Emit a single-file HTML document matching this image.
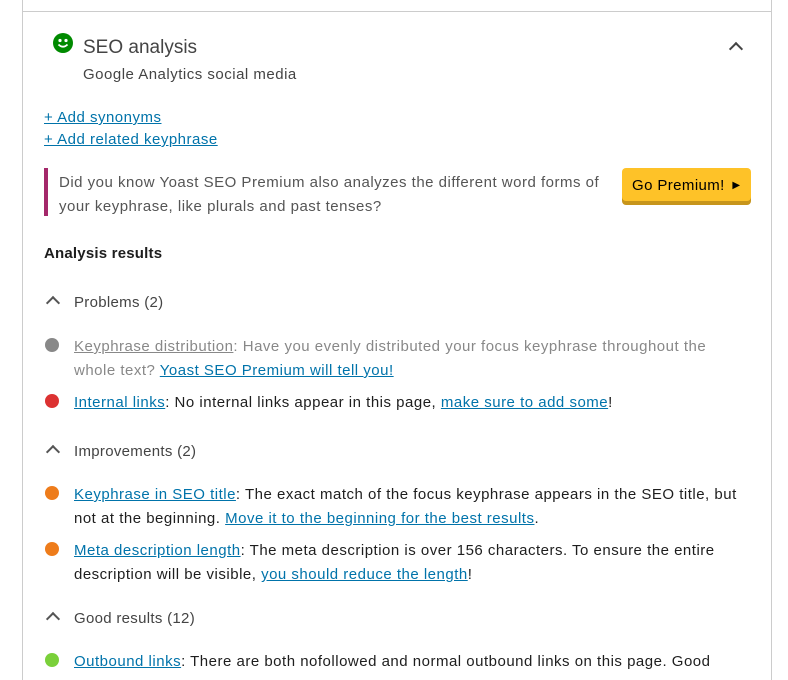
<!DOCTYPE html>
<html><head><style>
body{margin:0;width:788px;height:668px;overflow:hidden;background:#fff;font-family:"Liberation Sans",sans-serif;color:#1e1e1e;position:relative}
.a{position:absolute;white-space:nowrap}
a{color:#0073aa;text-decoration:underline}
.t{font-size:15px;line-height:24px;color:#1e1e1e;letter-spacing:0.5px}
.dot{position:absolute;width:14px;height:14px;border-radius:50%}
.chev{position:absolute;width:8px;height:8px;border-left:2px solid #555;border-top:2px solid #555;transform:rotate(45deg)}
</style></head><body>
<div style="position:absolute;left:22px;top:0;width:748px;height:680px;border-left:1px solid #ccc;border-right:1px solid #ccc"></div>
<div style="position:absolute;left:22px;top:11px;width:750px;height:1px;background:#ccc"></div>

<svg class="a" style="left:53px;top:33px" width="20" height="20" viewBox="0 0 20 20"><circle cx="10" cy="10" r="10" fill="#008a00"/><circle cx="7" cy="7.5" r="1.6" fill="#fff"/><circle cx="13" cy="7.5" r="1.6" fill="#fff"/><path d="M5.5 11.5 Q10 16 14.5 11.5" stroke="#fff" stroke-width="1.8" fill="none"/></svg>
<div class="a" style="left:83px;top:37px;font-size:19px;color:#444">SEO analysis</div>
<div class="a" style="left:83px;top:66px;font-size:15px;color:#444;letter-spacing:0.5px">Google Analytics social media</div>
<div class="chev" style="left:731px;top:44px;border-color:#444"></div>

<div class="a t" style="left:44px;top:106px"><a>+ Add synonyms</a></div>
<div class="a t" style="left:44px;top:128px"><a>+ Add related keyphrase</a></div>

<div style="position:absolute;left:44px;top:168px;width:4px;height:48px;background:#a4286a"></div>
<div class="a t" style="left:59px;top:171px;color:#555">Did you know Yoast SEO Premium also analyzes the different word forms of<br>your keyphrase, like plurals and past tenses?</div>
<div style="position:absolute;left:622px;top:168px;width:129px;height:33px;background:#fec228;border-radius:4px;box-shadow:0 4px 0 #c7951b;font-size:15px;line-height:35px;color:#000;text-indent:10px;letter-spacing:0.4px">Go Premium! <span style="font-size:10px;position:relative;top:-2px;left:3px">&#9654;</span></div>

<div class="a" style="left:44px;top:245px;font-size:15px;font-weight:bold;color:#1e1e1e;letter-spacing:0.2px">Analysis results</div>

<div class="chev" style="left:48px;top:298px"></div>
<div class="a t" style="left:74px;top:291px;color:#444;letter-spacing:0.3px">Problems (2)</div>
<div class="dot" style="left:45px;top:338px;background:#888"></div>
<div class="a t" style="left:74px;top:335px;color:#888"><a style="color:#888">Keyphrase distribution</a>: Have you evenly distributed your focus keyphrase throughout the<br>whole text? <a>Yoast SEO Premium will tell you!</a></div>
<div class="dot" style="left:45px;top:394px;background:#dc3232"></div>
<div class="a t" style="left:74px;top:391px"><a>Internal links</a>: No internal links appear in this page, <a>make sure to add some</a>!</div>

<div class="chev" style="left:48px;top:447px"></div>
<div class="a t" style="left:74px;top:440px;color:#444;letter-spacing:0.3px">Improvements (2)</div>
<div class="dot" style="left:45px;top:486px;background:#ee7c1b"></div>
<div class="a t" style="left:74px;top:483px"><a>Keyphrase in SEO title</a>: The exact match of the focus keyphrase appears in the SEO title, but<br>not at the beginning. <a>Move it to the beginning for the best results</a>.</div>
<div class="dot" style="left:45px;top:542px;background:#ee7c1b"></div>
<div class="a t" style="left:74px;top:539px"><a>Meta description length</a>: The meta description is over 156 characters. To ensure the entire<br>description will be visible, <a>you should reduce the length</a>!</div>

<div class="chev" style="left:48px;top:614px"></div>
<div class="a t" style="left:74px;top:607px;color:#444;letter-spacing:0.3px">Good results (12)</div>
<div class="dot" style="left:45px;top:653px;background:#7ad03a"></div>
<div class="a t" style="left:74px;top:650px"><a>Outbound links</a>: There are both nofollowed and normal outbound links on this page. Good</div>
</body></html>
